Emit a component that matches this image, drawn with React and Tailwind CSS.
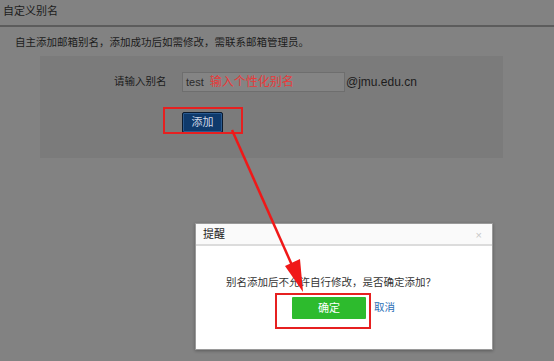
import React from 'react';

const cjk = { fontFamily: '"Liberation Sans", "Noto Sans CJK SC", sans-serif' };

const Arrow = () => (
  <svg className="absolute inset-0 pointer-events-none" width="554" height="361" viewBox="0 0 554 361">
    <line x1="232" y1="130" x2="295" y2="272" stroke="#f01818" strokeWidth="2.5" />
    <polygon points="303,292 285,266 300,259" fill="#f01818" />
  </svg>
);

const Dialog = () => (
  <div className="absolute left-[195px] top-[223px] w-[298px] h-[127px] bg-white border border-[#9a9a9a] shadow-[0_1px_3px_rgba(0,0,0,0.3)]">
    <div className="relative h-[22px] bg-[#fafafa] border-b-2 border-[#dcdcdc] pl-[7px] flex items-center text-[11px] text-[#222]">
      提醒
      <span className="absolute right-[10px] top-[3px] text-[11px] text-[#c8c8c8]">×</span>
    </div>
    <p className="mt-[29px] pl-[30px] text-[10.5px] leading-[14px] text-[#333]">
      别名添加后不允许自行修改，是否确定添加？
    </p>
    <div className="mt-[8px] pl-[96px] flex items-center gap-[8px]">
      <button className="w-[74px] h-[22px] bg-[#2dbb2d] text-white text-[11px] rounded-[1px]">确定</button>
      <span className="text-[10.5px] text-[#2a6db5]">取消</span>
    </div>
  </div>
);

export default function App() {
  return (
    <div className="relative w-[554px] h-[361px] overflow-hidden bg-[#828282]" style={cjk}>
      <div className="h-[27px] border-b-2 border-[#5c5c5c] pl-[3px] pt-[5px] text-[11px] leading-[13px] text-[#1c1c1c]">
        自定义别名
      </div>
      <p className="mt-[8px] pl-[15px] text-[10.5px] leading-[14px] text-[#1c1c1c]">
        自主添加邮箱别名，添加成功后如需修改，需联系邮箱管理员。
      </p>
      <div className="ml-[40px] mt-[7px] w-[463px] h-[102px] bg-[#7b7b7b]">
        <div className="pt-[16px] flex items-center text-[12px] text-[#1c1c1c]">
          <span className="ml-[74px] w-[68px] text-[10.5px]">请输入别名</span>
          <div className="w-[163px] h-[20px] bg-[#848484] border border-[#6e6e6e] flex items-center pl-[3px]">
            <span className="text-[11px] text-[#2a2a2a]">test</span>
            <span className="ml-[6px] text-[12px] text-[#e83a3a]">输入个性化别名</span>
          </div>
          <span className="ml-[1px] text-[#1c1c1c]">@jmu.edu.cn</span>
        </div>
        <div className="mt-[17px] pl-[142px]">
          <button className="w-[41px] h-[21px] rounded-[2px] bg-[#0f3a6c] border border-[#0a1a2e] shadow-[inset_0_0_0_1px_#2a5a90] text-[11px] leading-[15px] text-[#cfd8e6]">
            添加
          </button>
        </div>
      </div>

      <Dialog />

      <div className="absolute left-[163px] top-[107px] w-[80px] h-[27px] border-2 border-[#e62020]" />
      <div className="absolute left-[275px] top-[293px] w-[96px] h-[36px] border-2 border-[#e62020]" />
      <Arrow />
    </div>
  );
}
